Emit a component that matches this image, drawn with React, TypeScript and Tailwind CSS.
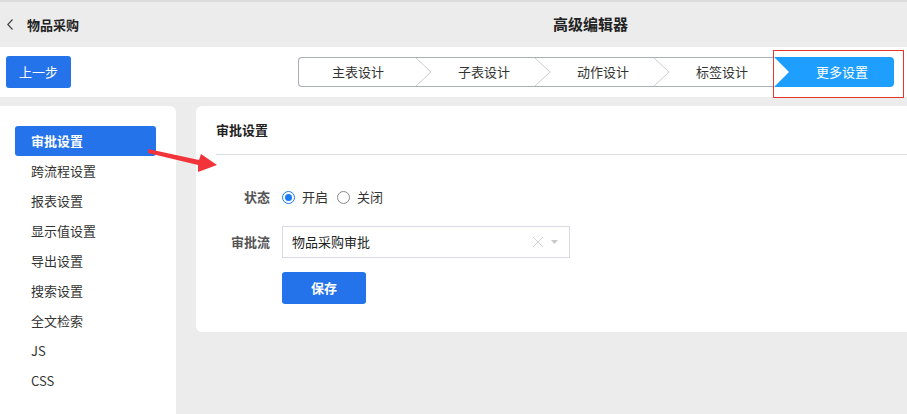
import React, { useState } from 'react';

const steps = ['主表设计', '子表设计', '动作设计', '标签设计'];
const menu = ['审批设置', '跨流程设置', '报表设置', '显示值设置', '导出设置', '搜索设置', '全文检索', 'JS', 'CSS'];

const Chevron = () => (
  <svg className="absolute left-[-1px] top-0 h-full w-[17px]" viewBox="0 0 17 30" preserveAspectRatio="none">
    <polyline points="0,0 15,15 0,30" fill="none" stroke="#c8cad0" strokeWidth="1" />
  </svg>
);

const App: React.FC = () => {
  const [active, setActive] = useState(0);
  const [status, setStatus] = useState<'on' | 'off'>('on');

  return (
    <div className="relative w-full h-[414px] overflow-hidden bg-[#ececec] text-[#333] font-['Noto_Sans_CJK_SC','Noto_Sans',sans-serif]">
      {/* 顶部标题栏 */}
      <div className="h-[47px] border-t-2 border-[#dcdcdc] flex items-center">
        <svg className="ml-[7px]" width="6" height="11" viewBox="0 0 6 11">
          <polyline points="5.5,0.5 0.8,5.5 5.5,10.5" fill="none" stroke="#444" strokeWidth="1.2" />
        </svg>
        <span className="ml-[14px] text-[13px] font-bold text-[#222]">物品采购</span>
        <span className="ml-[474px] text-[15px] font-bold text-[#222]">高级编辑器</span>
      </div>

      {/* 工具栏 */}
      <div className="h-[50px] bg-white flex items-center">
        <button className="ml-[6px] w-[65px] h-[32px] rounded-[3px] bg-[#2473ea] text-white text-[13px]">上一步</button>
        <div className="ml-[227px] flex h-[30px]">
          <div className="flex border border-[#a9adb8] border-r-0 rounded-l-[4px]">
            {steps.map((s, i) => (
              <div key={s} className={`relative h-full flex items-center justify-center text-[13px] text-[#333] ${i === 0 ? 'w-[118px]' : 'w-[119px] pl-[15px]'}`}>
                {i > 0 && <Chevron />}
                {s}
              </div>
            ))}
          </div>
          <div className="relative w-[120px] h-full bg-[#1e9fff] rounded-r-[4px] flex items-center justify-center pl-[16px] text-[13px] text-white">
            <svg className="absolute left-0 top-0 h-full w-[16px]" viewBox="0 0 16 30" preserveAspectRatio="none">
              <polygon points="0,0 15,15 0,30" fill="#ffffff" />
            </svg>
            更多设置
          </div>
        </div>
      </div>

      {/* 主体 */}
      <div className="flex mt-[9px] gap-[20px]">
        <div className="w-[176px] h-[320px] bg-white rounded-tr-[6px] pt-[20px] pl-[15px]">
          {menu.map((m, i) => (
            <div
              key={m}
              onClick={() => setActive(i)}
              className={`w-[141px] h-[30px] flex items-center pl-[16px] pb-[1px] text-[13px] rounded-[3px] cursor-pointer ${active === i ? 'bg-[#2473ea] text-white font-bold' : 'text-[#333]'}`}
            >
              {m}
            </div>
          ))}
        </div>

        <div className="flex-1 h-[226px] bg-white rounded-l-[6px] pl-[20px]">
          <div className="h-[49px] flex items-center border-b border-[#dcdde1] text-[13px] font-bold text-[#222]">审批设置</div>
          <div className="mt-[32px] flex items-center h-[20px]">
            <span className="w-[54px] text-right text-[13px] font-bold text-[#555]">状态</span>
            <label className="ml-[12px] flex items-center cursor-pointer" onClick={() => setStatus('on')}>
              <span className={`w-[13px] h-[13px] rounded-full border flex items-center justify-center ${status === 'on' ? 'border-[#1a7cf0]' : 'border-[#888]'}`}>
                {status === 'on' && <span className="w-[7px] h-[7px] rounded-full bg-[#1a7cf0]" />}
              </span>
              <span className="ml-[7px] text-[13px]">开启</span>
            </label>
            <label className="ml-[9px] flex items-center cursor-pointer" onClick={() => setStatus('off')}>
              <span className={`w-[13px] h-[13px] rounded-full border flex items-center justify-center ${status === 'off' ? 'border-[#1a7cf0]' : 'border-[#888]'}`}>
                {status === 'off' && <span className="w-[7px] h-[7px] rounded-full bg-[#1a7cf0]" />}
              </span>
              <span className="ml-[7px] text-[13px]">关闭</span>
            </label>
          </div>
          <div className="mt-[19px] flex items-center">
            <span className="w-[54px] text-right text-[13px] font-bold text-[#555]">审批流</span>
            <div className="ml-[12px] w-[288px] h-[32px] border border-[#d7dae2] flex items-center pl-[9px] pr-[11px]">
              <span className="flex-1 text-[13px] text-[#222]">物品采购审批</span>
              <svg width="12" height="12" viewBox="0 0 12 12">
                <path d="M1 1 L11 11 M11 1 L1 11" stroke="#d4d4d4" strokeWidth="1" />
              </svg>
              <svg className="ml-[7px]" width="7" height="4" viewBox="0 0 7 4">
                <polygon points="0,0 7,0 3.5,4" fill="#c8c8c8" />
              </svg>
            </div>
          </div>
          <button className="ml-[66px] mt-[14px] w-[84px] h-[32px] rounded-[3px] bg-[#2473ea] text-white text-[13px] font-bold">保存</button>
        </div>
      </div>

      {/* 标注 */}
      <svg className="absolute left-0 top-0 pointer-events-none" width="907" height="414">
        <polygon points="148,149 199,160 201,154 217,165 198,172 198,165 148,153" fill="#f2343a" />
      </svg>
      <div className="absolute left-[773px] top-[50px] w-[131px] h-[48px] border border-[#e8342c] pointer-events-none" />
    </div>
  );
};

export default App;
